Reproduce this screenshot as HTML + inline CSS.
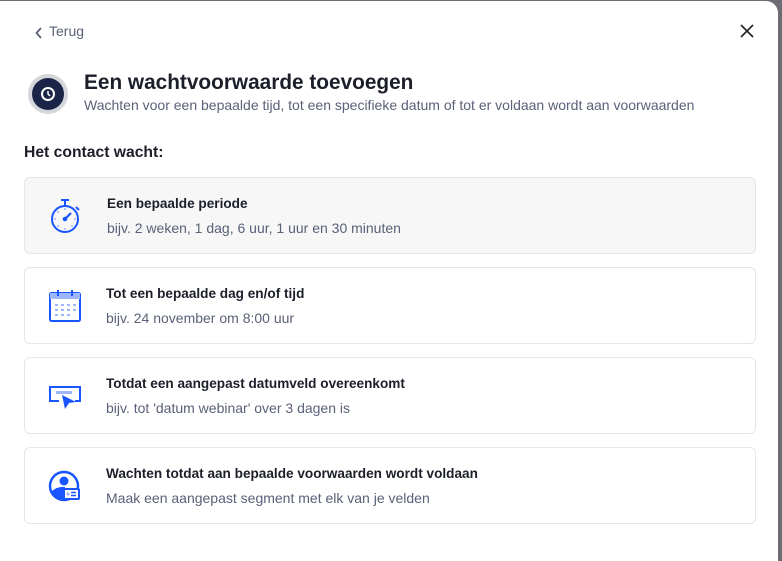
<!DOCTYPE html>
<html><head><style>
body{margin:0;width:782px;height:550px;background:#6b6d72;overflow:hidden;font-family:"Liberation Sans",sans-serif}
.m{position:absolute;left:0;top:1px;width:778px;height:560px;background:#fff;border-radius:0 12px 0 0}
.back{position:absolute;left:49px;top:22px;font-size:14px;color:#5a6178}
.bk{position:absolute;left:35px;top:26px}
.x{position:absolute;left:740px;top:23px}
.ic{position:absolute;left:28px;top:73px;width:40px;height:40px;border-radius:50%;background:#d4d6db}
.ic div{position:absolute;left:4px;top:4px;width:32px;height:32px;border-radius:50%;background:#1b2547}
h1{position:absolute;left:84px;top:70px;margin:0;font-size:20.8px;font-weight:bold;color:#1c1f2a}
.sub{position:absolute;left:84px;top:96px;font-size:14px;color:#5a6178}
.hc{position:absolute;left:24px;top:143px;font-size:15.7px;font-weight:bold;color:#1c1f2a}
.c{position:absolute;left:24px;width:730px;height:75px;border:1px solid #e5e6ea;border-radius:6px;background:#fff}
.c b{position:absolute;left:81px;top:18px;font-size:13.6px;color:#1c1f2a}
.c span{position:absolute;left:81px;top:42px;font-size:14px;color:#5a6178}
.c svg{position:absolute;left:22px;top:20px}
</style></head><body><div class="m">
<svg class="bk" width="8" height="12"><path d="M6 1L1.5 6L6 11" fill="none" stroke="#5a6178" stroke-width="1.8"/></svg>
<div class="back">Terug</div>
<svg class="x" width="14" height="14"><path d="M1 1L13 13M13 1L1 13" stroke="#222" stroke-width="1.6"/></svg>
<div class="ic"><div><svg width="32" height="32"><circle cx="16" cy="16" r="6" fill="none" stroke="#fff" stroke-width="2"/><path d="M16 13v3l2 2" stroke="#fff" stroke-width="1.5" fill="none"/></svg></div></div>
<h1>Een wachtvoorwaarde toevoegen</h1>
<div class="sub">Wachten voor een bepaalde tijd, tot een specifieke datum of tot er voldaan wordt aan voorwaarden</div>
<div class="hc">Het contact wacht:</div>
<div class="c" style="top:176px;background:#f7f7f8"><svg width="40" height="40" style="left:24px;top:19px"><circle cx="16" cy="22" r="13" fill="none" stroke="#1a56ff" stroke-width="2"/><path d="M12 3h8M16 3v6M27 10l3 3" stroke="#1a56ff" stroke-width="2"/><path d="M16 22l6-6" stroke="#1a56ff" stroke-width="2.2"/><circle cx="16" cy="22" r="2.3" fill="#1a56ff"/><g fill="#9db6ff"><circle cx="16" cy="12" r="1"/><circle cx="16" cy="32" r="1"/><circle cx="6" cy="22" r="1"/><circle cx="26" cy="22" r="1"/><circle cx="9" cy="15" r="1"/><circle cx="9" cy="29" r="1"/><circle cx="23" cy="29" r="1"/></g></svg><b style="left:82px">Een bepaalde periode</b><span style="left:82px">bijv. 2 weken, 1 dag, 6 uur, 1 uur en 30 minuten</span></div>
<div class="c" style="top:266px"><svg width="36" height="36"><rect x="3" y="5" width="30" height="28" rx="1.5" fill="none" stroke="#1a56ff" stroke-width="2"/><rect x="3" y="5" width="30" height="6" fill="#9db6ff"/><path d="M11 2v6M25 2v6" stroke="#1a56ff" stroke-width="2"/><g fill="#9db6ff"><rect x="8" y="16" width="3" height="2"/><rect x="14" y="16" width="3" height="2"/><rect x="20" y="16" width="3" height="2"/><rect x="26" y="16" width="3" height="2"/><rect x="8" y="21" width="3" height="2"/><rect x="14" y="21" width="3" height="2"/><rect x="20" y="21" width="3" height="2"/><rect x="26" y="21" width="3" height="2"/><rect x="8" y="26" width="3" height="2"/><rect x="14" y="26" width="3" height="2"/><rect x="20" y="26" width="3" height="2"/></g></svg><b>Tot een bepaalde dag en/of tijd</b><span>bijv. 24 november om 8:00 uur</span></div>
<div class="c" style="top:356px"><svg width="36" height="36"><path d="M12 23H3V9h30v14h-5" fill="none" stroke="#1a56ff" stroke-width="2"/><rect x="9" y="13" width="16" height="3" fill="#9db6ff"/><path d="M15 17l14 7-7 1-4 6z" fill="#1a56ff"/></svg><b>Totdat een aangepast datumveld overeenkomt</b><span>bijv. tot 'datum webinar' over 3 dagen is</span></div>
<div class="c" style="top:446px"><svg width="36" height="36"><circle cx="17" cy="18" r="14" fill="none" stroke="#1a56ff" stroke-width="2.5"/><circle cx="17" cy="13" r="4.5" fill="#1a56ff"/><path d="M4 24q6-6 14-5v13q-9 0-14-8z" fill="#1a56ff"/><rect x="17" y="21" width="15" height="10" rx="1" fill="#fff" stroke="#1a56ff" stroke-width="2"/><circle cx="21" cy="26" r="1.6" fill="#9db6ff"/><path d="M24 24.5h5M24 27.5h5" stroke="#1a56ff" stroke-width="1.5"/></svg><b>Wachten totdat aan bepaalde voorwaarden wordt voldaan</b><span>Maak een aangepast segment met elk van je velden</span></div>
</div></body></html>
